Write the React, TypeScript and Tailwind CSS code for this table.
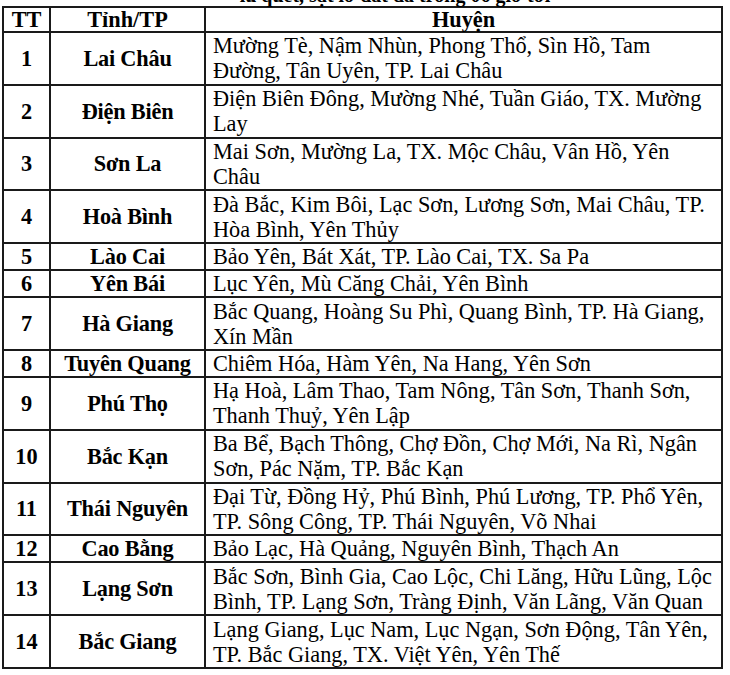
import React from "react";

const rows: [string, string, string[]][] = [
  ["1", "Lai Châu", ["Mường Tè, Nậm Nhùn, Phong Thổ, Sìn Hồ, Tam", "Đường, Tân Uyên, TP. Lai Châu"]],
  ["2", "Điện Biên", ["Điện Biên Đông, Mường Nhé, Tuần Giáo, TX. Mường", "Lay"]],
  ["3", "Sơn La", ["Mai Sơn, Mường La, TX. Mộc Châu, Vân Hồ, Yên", "Châu"]],
  ["4", "Hoà Bình", ["Đà Bắc, Kim Bôi, Lạc Sơn, Lương Sơn, Mai Châu, TP.", "Hòa Bình, Yên Thủy"]],
  ["5", "Lào Cai", ["Bảo Yên, Bát Xát, TP. Lào Cai, TX. Sa Pa"]],
  ["6", "Yên Bái", ["Lục Yên, Mù Căng Chải, Yên Bình"]],
  ["7", "Hà Giang", ["Bắc Quang, Hoàng Su Phì, Quang Bình, TP. Hà Giang,", "Xín Mần"]],
  ["8", "Tuyên Quang", ["Chiêm Hóa, Hàm Yên, Na Hang, Yên Sơn"]],
  ["9", "Phú Thọ", ["Hạ Hoà, Lâm Thao, Tam Nông, Tân Sơn, Thanh Sơn,", "Thanh Thuỷ, Yên Lập"]],
  ["10", "Bắc Kạn", ["Ba Bể, Bạch Thông, Chợ Đồn, Chợ Mới, Na Rì, Ngân", "Sơn, Pác Nặm, TP. Bắc Kạn"]],
  ["11", "Thái Nguyên", ["Đại Từ, Đồng Hỷ, Phú Bình, Phú Lương, TP. Phổ Yên,", "TP. Sông Công, TP. Thái Nguyên, Võ Nhai"]],
  ["12", "Cao Bằng", ["Bảo Lạc, Hà Quảng, Nguyên Bình, Thạch An"]],
  ["13", "Lạng Sơn", ["Bắc Sơn, Bình Gia, Cao Lộc, Chi Lăng, Hữu Lũng, Lộc", "Bình, TP. Lạng Sơn, Tràng Định, Văn Lãng, Văn Quan"]],
  ["14", "Bắc Giang", ["Lạng Giang, Lục Nam, Lục Ngạn, Sơn Động, Tân Yên,", "TP. Bắc Giang, TX. Việt Yên, Yên Thế"]],
];

export default function App() {
  return (
    <div className="w-[730px] h-[675px] overflow-hidden bg-white text-black font-['Liberation_Serif','Times_New_Roman',serif]">
      <div className="mt-[-15px] h-[21px] text-center text-[20px] leading-[20px] font-bold pl-[60px]">
        lũ quét, sạt lở đất đá trong 06 giờ tới
      </div>
      <table className="ml-[2px] w-[721px] table-fixed border-collapse text-[22.3px] leading-[25px]">
        <colgroup>
          <col className="w-[47px]" />
          <col className="w-[155px]" />
          <col />
        </colgroup>
        <thead>
          <tr className="h-[25px]">
            <th className="border-2 border-[#1a1a1a] font-bold text-center p-0 leading-[21px]">TT</th>
            <th className="border-2 border-[#1a1a1a] font-bold text-center p-0 leading-[21px]">Tỉnh/TP</th>
            <th className="border-2 border-[#1a1a1a] font-bold text-center p-0 leading-[21px]">Huyện</th>
          </tr>
        </thead>
        <tbody>
          {rows.map(([n, p, lines]) => (
            <tr key={n} className={lines.length > 1 ? "h-[52.8px]" : "h-[26px]"}>
              <td className="border-2 border-[#1a1a1a] font-bold text-center p-0 align-middle">{n}</td>
              <td className="border-2 border-[#1a1a1a] font-bold text-center p-0 align-middle whitespace-nowrap tracking-[-0.2px]">{p}</td>
              <td className="border-2 border-[#1a1a1a] pl-[7px] pr-0 py-0 align-middle">
                {lines.map((l, i) => (
                  <div key={i} className="whitespace-nowrap">{l}</div>
                ))}
              </td>
            </tr>
          ))}
        </tbody>
      </table>
    </div>
  );
}
